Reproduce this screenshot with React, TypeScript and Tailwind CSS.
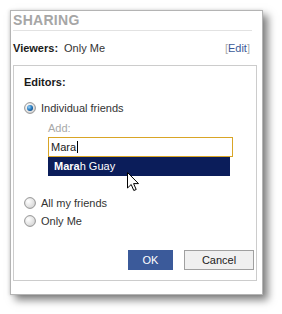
import React from "react";

function Radio({ checked }: { checked?: boolean }) {
  return (
    <svg width="12" height="12" viewBox="0 0 12 12" className="shrink-0">
      <defs>
        <radialGradient id="rbg" cx="0.35" cy="0.35" r="0.8">
          <stop offset="0" stopColor="#ffffff" />
          <stop offset="1" stopColor="#cfcfcf" />
        </radialGradient>
        <radialGradient id="rdot" cx="0.35" cy="0.35" r="0.7">
          <stop offset="0" stopColor="#9fd3f5" />
          <stop offset="0.6" stopColor="#2a7fc4" />
          <stop offset="1" stopColor="#0f4f8c" />
        </radialGradient>
      </defs>
      <circle cx="6" cy="6" r="5.4" fill="url(#rbg)" stroke="#8a8a8a" strokeWidth="0.9" />
      {checked && <circle cx="6" cy="6" r="3" fill="url(#rdot)" />}
    </svg>
  );
}

export default function App() {
  const font = { fontFamily: '"Liberation Sans", Arial, sans-serif' };
  return (
    <div className="w-[282px] h-[314px] bg-white pl-[10px] pt-[10px] relative" style={font}>
      <div className="w-[253px] h-[285px] bg-white border border-[#b4b4b4] shadow-[5px_5px_8px_rgba(0,0,0,0.5),-1px_0_3px_rgba(0,0,0,0.12)] flex flex-col text-[11px] text-[#222]">
        <div className="h-[20px] ml-[2px] mr-[10px] border-b border-[#e2e2e2] flex items-center">
          <span className="text-[14px] font-bold text-[#a6a6a6] tracking-[0.3px]">SHARING</span>
        </div>
        <div className="h-[34px] ml-[2px] mr-[12px] flex items-center">
          <span className="font-bold text-[#1a1a1a]">Viewers:</span>
          <span className="ml-[6px] text-[#333]">Only Me</span>
          <span className="ml-auto text-[#3b5998]">
            <span className="text-[#aaaaaa]">[</span>Edit<span className="text-[#aaaaaa]">]</span>
          </span>
        </div>
        <div className="ml-[2px] w-[244px] h-[216px] border border-[#cccccc] pl-[10px] flex flex-col relative">
          <div className="h-[12px] mt-[10px] flex items-center font-bold text-[#1a1a1a]">Editors:</div>
          <div className="h-[14px] mt-[13px] flex items-center gap-[5px]">
            <Radio checked />
            <span className="text-[#333]">Individual friends</span>
          </div>
          <div className="h-[12px] mt-[7px] pl-[24px] flex items-center text-[#a8a8a8]">Add:</div>
          <div className="ml-[24px] mt-[3px] w-[185px] h-[20px] border border-[#d9a526] flex items-center pl-[2px] text-[#222]">
            Mara<span className="inline-block w-[1px] h-[12px] bg-black ml-[1px]"></span>
          </div>
          <div className="ml-[24px] w-[182px] h-[19px] bg-[#0b1d5a] flex items-center pl-[6px] text-white text-[11px]">
            <span className="font-bold">Mara</span>h Guay
          </div>
          <div className="h-[14px] mt-[20px] flex items-center gap-[5px]">
            <Radio />
            <span className="text-[#333]">All my friends</span>
          </div>
          <div className="h-[14px] mt-[4px] flex items-center gap-[5px]">
            <Radio />
            <span className="text-[#333]">Only Me</span>
          </div>
          <div className="mt-[22px] flex justify-end gap-[11px] pr-[2px]">
            <div className="w-[45px] h-[20px] bg-[#3b5a9a] text-white flex items-center justify-center">OK</div>
            <div className="w-[70px] h-[20px] bg-[#f0f0f0] border border-[#a0a0a0] text-[#222] flex items-center justify-center">Cancel</div>
          </div>
        </div>
      </div>
      <svg className="absolute left-[127px] top-[172px]" width="13" height="20" viewBox="0 0 13 20">
        <path d="M0.5 0.5 L0.5 16 L4.2 12.5 L6.8 18.5 L9.2 17.5 L6.6 11.6 L11.5 11.6 Z" fill="#ffffff" stroke="#000000" strokeWidth="1" strokeLinejoin="miter" />
      </svg>
    </div>
  );
}
